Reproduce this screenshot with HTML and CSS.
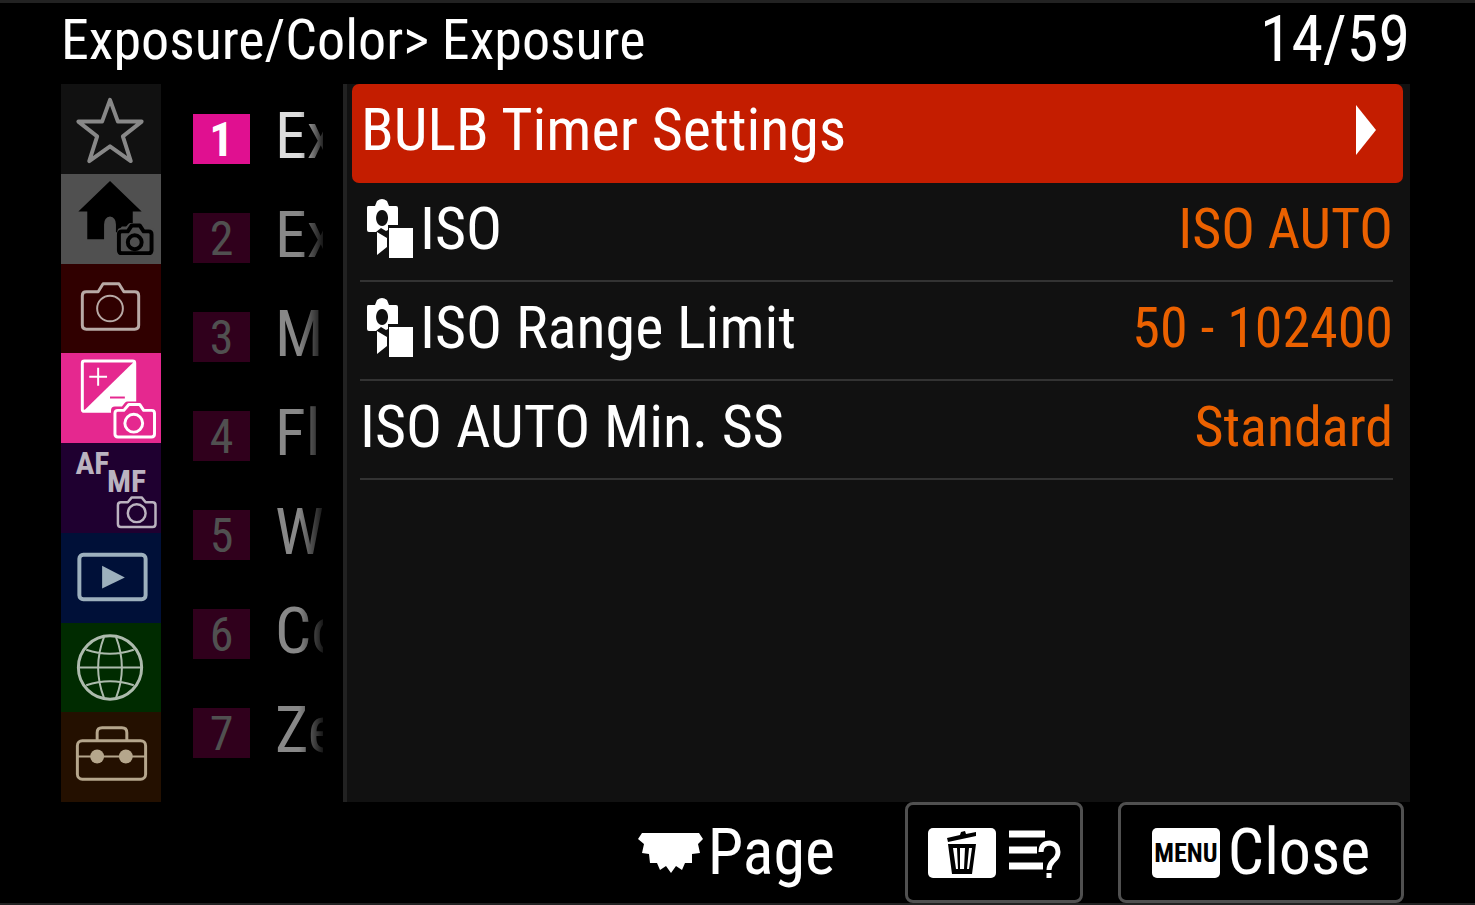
FILE: index.html
```html
<!DOCTYPE html>
<html lang="en">
<head>
<meta charset="utf-8">
<title>Exposure/Color</title>
<link rel="stylesheet" href="styles.css">
</head>
<body>
<svg class="defs" aria-hidden="true">
  <symbol id="still-movie" viewBox="0 0 48 60">
    <path fill="currentColor" fill-rule="evenodd" d="M2 7h7l2-5q5-4 10 0l2 5h7q2 0 2 2v17H22v5l-2 1-5-3-5 4H3q-2 0-2-2V9q0-2 1-2zM16 11a6 8 0 1 0 .1 0z"/>
    <path fill="currentColor" d="M11 33l10 6v9l-10 8zM23 29h24v30H23z"/>
  </symbol>
</svg>

<header class="top">
  <h1 class="title">Exposure/Color&gt; Exposure</h1>
  <span class="count">14/59</span>
</header>

<main class="main">
  <nav class="tabs" aria-label="Menu tabs">
    <button class="tab tab-star" aria-label="My Menu"><svg viewBox="0 0 100 90"><path d="M49 16l8 22h24L62 53l8 25-21-15-21 15 8-25-19-15h24z"/></svg></button>
    <button class="tab tab-home" aria-label="Main"><svg viewBox="0 0 100 90"><path fill="#000" stroke="none" d="M49 7l32 31h-9v15H61l-5 6h-1V51q0-7-6-8-6 1-6 8v15H26V38h-9z"/><path fill="#505050" stroke="#505050" stroke-width="7" d="M60 58h6l4-5h8l4 5h8v22H58z"/><g stroke="#000" stroke-width="4"><path d="M61 58h6l4-6h8l4 6h5q3 0 3 3v16q0 3-3 3H61q-3 0-3-3V61q0-3 3-3z"/><circle cx="74" cy="69" r="7"/></g></svg></button>
    <button class="tab tab-shoot" aria-label="Shooting"><svg viewBox="0 0 100 90"><path d="M25 28h12l5-8h16l5 8h11q4 0 4 4v30q0 4-4 4H25q-4 0-4-4V32q0-4 4-4z"/><circle stroke-width="2" cx="49" cy="45" r="13"/></svg></button>
    <button class="tab tab-exposure" aria-label="Exposure/Color"><svg viewBox="0 0 100 90"><rect x="21" y="7" width="53" height="51" rx="2"/><path fill="#fff" stroke="none" d="M74 7v51H22z"/><path stroke-width="2" d="M28 23h18M37 14v18"/><path stroke="#e5288f" stroke-width="2" d="M49 44h15"/><path fill="#e5288f" stroke="#e5288f" stroke-width="8" d="M54 57h9l4-5h12l4 5h9v24H54z"/><path d="M57 57h6l5-6h11l4 6h8q3 0 3 3v21q0 3-3 3H57q-3 0-3-3V60q0-3 3-3z"/><circle cx="73" cy="70" r="9"/></svg></button>
    <button class="tab tab-focus" aria-label="Focus"><svg viewBox="0 0 100 90"><g class="afmf"><text x="14" y="31">AF</text><text x="46" y="50">MF</text></g><g stroke-width="2.5"><path d="M60 60h7l4-5h10l4 5h7q3 0 3 3v19q0 3-3 3H60q-3 0-3-3V63q0-3 3-3z"/><circle cx="76" cy="71" r="9"/></g></svg></button>
    <button class="tab tab-play" aria-label="Playback"><svg viewBox="0 0 100 90"><rect stroke-width="4" x="18" y="22" width="67" height="45" rx="4"/><path fill="currentColor" stroke="none" d="M41 33l23 12-23 11z"/></svg></button>
    <button class="tab tab-network" aria-label="Network"><svg viewBox="0 0 100 90"><circle cx="49" cy="45" r="32"/><g stroke-width="2"><path d="M43 14q-12 31 0 62M55 14q12 31 0 62M17 45h64M25 27q24 8 48 0M25 63q24-8 48 0"/></g></svg></button>
    <button class="tab tab-setup" aria-label="Setup"><svg viewBox="0 0 100 90"><path d="M36 28v-8q0-5 5-5h20q5 0 5 5v8"/><rect x="16" y="28" width="69" height="39" rx="5"/><path stroke-width="2" d="M16 44h69"/><g fill="currentColor" stroke="none"><circle cx="36" cy="44" r="7"/><circle cx="65" cy="44" r="7"/></g></svg></button>
  </nav>

  <nav class="groups" aria-label="Groups">
    <button class="group current"><span class="num">1</span><span class="name">Ex</span></button>
    <button class="group"><span class="num">2</span><span class="name">Ex</span></button>
    <button class="group"><span class="num">3</span><span class="name">M</span></button>
    <button class="group"><span class="num">4</span><span class="name">Fla</span></button>
    <button class="group"><span class="num">5</span><span class="name">W</span></button>
    <button class="group"><span class="num">6</span><span class="name">Co</span></button>
    <button class="group"><span class="num">7</span><span class="name">Ze</span></button>
  </nav>

  <section class="panel" aria-label="Exposure">
    <button class="row selected"><span class="label">BULB Timer Settings</span><svg class="arrow" viewBox="0 0 20 50"><path fill="currentColor" d="M0 0l20 25L0 50z"/></svg></button>
    <button class="row"><svg class="mode"><use href="#still-movie"/></svg><span class="label">ISO</span><span class="value">ISO AUTO</span></button>
    <button class="row"><svg class="mode"><use href="#still-movie"/></svg><span class="label">ISO Range Limit</span><span class="value">50 - 102400</span></button>
    <button class="row"><span class="label">ISO AUTO Min. SS</span><span class="value">Standard</span></button>
  </section>
</main>

<footer class="bottom">
  <span class="page"><svg class="dial" viewBox="0 0 66 40"><path fill="currentColor" d="M0 6L4 0h57l4 6-5 5 2 9-8 1v9h-7l-3 7-6-4-5 7-5-7-6 4-3-7h-7l-1-9-7-1 2-9z"/></svg>Page</span>
  <button class="key help" aria-label="Help"><svg class="trash" viewBox="0 0 68 50"><rect width="68" height="50" rx="5" fill="#fff"/><path d="M19 10l13-3 1-3 4-1 1 3 10-2v4L20 14z"/><path fill-rule="evenodd" d="M20 16h28l-4 30H24zM25 20l3 21h2l-1-21zM32 20v21h4l1-21zM41 20l-2 21h2l3-21z"/></svg><svg class="list" viewBox="0 0 52 50"><g fill="none" stroke="#fff" stroke-width="7"><path d="M0 6h36M0 22h28M0 38h34"/><path stroke-width="5" d="M32 24q0-9 9-9 8 1 8 9 0 5-5 9-4 4-4 9M40 45v5"/></g></svg></button>
  <button class="key close"><span class="menu">MENU</span>Close</button>
</footer>
</body>
</html>
```
FILE: styles.css
```css
* { box-sizing: border-box; }
body {
  margin: 0;
  min-height: 100vh;
  display: flex;
  flex-direction: column;
  padding: 0 65px 0 61px;
  border-top: 3px solid #222;
  border-bottom: 2px solid #222;
  background: #000;
  color: #fff;
  font-family: "Roboto Condensed", "Liberation Sans Narrow", "Liberation Sans", sans-serif;
}
button {
  margin: 0;
  padding: 0;
  border: 0;
  background: none;
  color: inherit;
  font: inherit;
  text-align: left;
}
.defs { display: none; }
.top {
  height: 81px;
  display: flex;
  justify-content: space-between;
  align-items: center;
  padding-bottom: 8px;
  font-size: 56px;
  line-height: 72px;
  white-space: nowrap;
}
.title { margin: 0; font-size: inherit; font-weight: 400; }
.count { font-size: 64px; }
.main {
  flex: 1;
  display: grid;
  grid-template-columns: 100px 182px 1fr;
}
.tabs { display: flex; flex-direction: column; }
.tab { flex: 1; display: flex; align-items: center; }
.tab svg {
  width: 100px;
  height: 89px;
  fill: none;
  stroke: currentColor;
  stroke-width: 3;
  stroke-linejoin: round;
}
.tab-star { background: #111; color: #888; }
.tab-star svg { stroke-width: 4; }
.tab-home { background: #505050; }
.tab-shoot { background: #300000; color: #b8aaa6; }
.tab-exposure { background: #e5288f; color: #fff; }
.tab-focus { background: #1f0030; color: #bbb3c0; }
.tab-play { background: #001038; color: #9db0bd; }
.tab-network { background: #002b00; color: #adbbad; }
.tab-setup { background: #241000; color: #b5a68c; }
.afmf { font-size: 32px; font-weight: 700; fill: currentColor; stroke: none; }

.groups { padding: 5px 20px 0 32px; }
.group {
  width: 100%;
  height: 99px;
  display: grid;
  grid-template-columns: 57px 48px;
  column-gap: 25px;
  align-items: center;
  color: #888;
}
.num {
  height: 50px;
  background: #30001c;
  color: #505050;
  font-size: 48px;
  line-height: 52px;
  text-align: center;
}
.name {
  overflow: hidden;
  padding-bottom: 4px;
  font-size: 64px;
  line-height: 88px;
  mask-image: linear-gradient(to right, #000 50%, transparent 110%);
}
.current { color: #ddd; }
.current .num { background: #e01090; color: #fff; font-weight: 700; }

.panel {
  padding: 0 7px 0 5px;
  border-left: 4px solid #222;
  background: #111;
}
.row {
  width: calc(100% - 18px);
  height: 99px;
  margin: 0 9px 0 8px;
  display: flex;
  align-items: center;
  padding-bottom: 6px;
  border-bottom: 2px solid #333;
  font-size: 60px;
  white-space: nowrap;
}
.row.selected {
  width: 100%;
  margin: 0;
  padding: 0 27px 8px 9px;
  border: 0;
  border-radius: 7px;
  background: #c41d00;
}
.mode { width: 48px; height: 60px; margin: 0 6px; }
.arrow { width: 20px; height: 50px; margin-left: auto; }
.value { margin-left: auto; color: #eb6100; font-size: 56px; }

.bottom {
  height: 101px;
  display: flex;
  justify-content: flex-end;
  padding-right: 6px;
  font-size: 64px;
}
.page { display: flex; align-items: center; gap: 4px; margin-right: 70px; }
.dial { width: 66px; height: 40px; }
.key {
  display: flex;
  align-items: center;
  justify-content: center;
  border: 3px solid #505050;
  border-radius: 8px;
}
.help { width: 178px; margin-right: 35px; gap: 13px; }
.trash { width: 68px; height: 50px; }
.list { width: 52px; height: 50px; }
.close { width: 286px; gap: 8px; }
.menu {
  width: 68px;
  border-radius: 5px;
  background: #fff;
  color: #000;
  font-size: 26px;
  font-weight: 700;
  line-height: 50px;
  text-align: center;
}
```
